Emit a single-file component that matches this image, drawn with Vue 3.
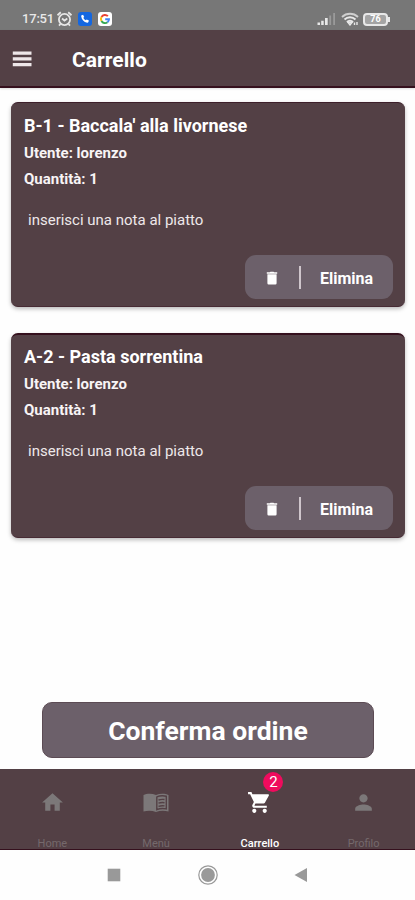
<script setup>
const dishes = [
  { id: 1, title: "B-1 - Baccala' alla livornese", cls: 'first' },
  { id: 2, title: 'A-2 - Pasta sorrentina', cls: 'second' },
]
const tabs = [
  { name: 'Home', icon: 'M10 20v-6h4v6h5v-8h3L12 3 2 12h3v8z' },
  { name: 'Menù', icon: 'book' },
  {
    name: 'Carrello',
    active: true,
    badge: 2,
    icon: 'M7 18c-1.1 0-1.99.9-1.99 2S5.900 22 7 22s2-.9 2-2-.9-2-2-2zM1 2v2h2l3.600 7.590-1.350 2.450c-.16.28-.25.61-.25.96 0 1.100.9 2 2 2h12v-2H7.420c-.14 0-.25-.11-.25-.25l.03-.12.9-1.630h7.450c.75 0 1.410-.41 1.750-1.030l3.580-6.490A1 1 0 0 0 20 4H5.210l-.94-2H1zm16 16c-1.100 0-1.990.9-1.990 2s.89 2 1.990 2 2-.9 2-2-.9-2-2-2z',
  },
  { name: 'Profilo', icon: 'M12 12c2.210 0 4-1.790 4-4s-1.790-4-4-4-4 1.790-4 4 1.790 4 4 4zm0 2c-2.670 0-8 1.340-8 4v2h16v-2c0-2.660-5.330-4-8-4z' },
]
</script>

<template>
  <div class="screen">
    <div class="status">
      <span class="time">17:51</span>
      <svg class="alarm" viewBox="0 0 16 16" fill="none" stroke="#e6e6e6" stroke-width="1.800">
        <circle cx="8" cy="8.500" r="5.600" />
        <path d="M5.500 7.500L8 9.500l2.800-2M1 4.200L4.300 1.300M15 4.200L11.700 1.300M4 13l-1.500 1.700M12 13l1.500 1.700" />
      </svg>
      <svg class="app phone" viewBox="0 0 14 14">
        <rect width="14" height="14" rx="3" fill="#1467e0" />
        <path d="M3.600 3.200l1.500-.5 1.100 2.200-.9.900c.5 1.200 1.300 2 2.500 2.500l.9-.9 2.200 1.100-.5 1.600c-.2.500-.7.700-1.200.6-3.300-.5-5.500-2.800-6-6.100-.1-.6 0-1.200.4-1.400z" fill="#fff" />
      </svg>
      <svg class="app" viewBox="0 0 14 14" fill="none" stroke-width="1.900">
        <rect width="14" height="14" rx="3" fill="#fff" />
        <path d="M9.900 4.200A4 4 0 0 0 3.500 5" stroke="#ea4335" />
        <path d="M3.500 5a4 4 0 0 0 0 4" stroke="#fbbc05" />
        <path d="M3.500 9a4 4 0 0 0 6 1.200" stroke="#34a853" />
        <path d="M9.500 10.200A4 4 0 0 0 11 7.200H7.200" stroke="#4285f4" />
      </svg>
      <svg class="signal" viewBox="0 0 20 14">
        <path fill="#e8e8e8" d="M.5 10.500h2.500V13H.5zM4.200 8.800h2.500V13H4.200zM8 6h2.700v7H8z" />
        <path fill="#9a9a9a" d="M12.300 3.500h1.800V13h-1.800zM16.200 1H18v12h-1.800z" />
      </svg>
      <svg class="wifi" viewBox="0 0 18 14" fill="none" stroke="#e8e8e8" stroke-width="1.900">
        <path d="M1 5c4.500-4.300 11.500-4.300 16 0" stroke="#cfcfcf" />
        <path d="M3.500 7.500c3-3 8-3 11 0M6 10c1.700-1.700 4.300-1.700 6 0" />
        <path d="M7 10.500h4L9 13zM13.500 10.500v2.500M16 10v3" stroke-width="1.400" />
      </svg>
      <div class="battery">76</div>
    </div>

    <header class="bar">
      <svg class="burger" viewBox="0 0 20 16"><path fill="#eee7e9" d="M.8.500h18.700v3.200H.8zM.8 6.200h18.700v3.200H.8zM.8 12h18.700v3.200H.8z" /></svg>
      <h1>Carrello</h1>
    </header>

    <main>
      <article v-for="dish in dishes" :key="dish.id" class="card" :class="dish.cls">
        <h2>{{ dish.title }}</h2>
        <p class="meta user">Utente: lorenzo</p>
        <p class="meta">Quantità: 1</p>
        <p class="note">inserisci una nota al piatto</p>
        <button class="remove">
          <svg viewBox="0 0 12 14"><path fill="#fff" d="M.8 1.300h3L4.500.7h3l.7.600h3v1.500H.8zM1.400 3.300h9.200v8.900a1.200 1.200 0 0 1-1.200 1.200H2.600a1.200 1.200 0 0 1-1.200-1.200z" /></svg>
          <i></i>
          <span class="remove-label">Elimina</span>
        </button>
      </article>
      <button class="confirm"><span>Conferma ordine</span></button>
    </main>

    <nav>
      <div v-for="tab in tabs" :key="tab.name" class="tab" :class="{ active: tab.active }">
        <div class="icon">
          <svg v-if="tab.icon === 'book'" class="book" viewBox="0 0 26 20">
            <path fill="currentColor" d="M.5 2C4 .2 9 .2 13 2c4-1.800 9-1.800 12.500 0v16.500c-4-1.200-8.500-1.200-12.500.5-4-1.700-8.500-1.700-12.500-.5z" />
            <path fill="none" stroke="#534045" stroke-width="1.400" d="M13.800 3.500v13.200c3-1.300 6.500-1.400 9.500-.8V3.200c-3-.7-6.500-.6-9.500.6M15.500 7c2-.7 4-.8 6-.5M15.500 10.200c2-.7 4-.8 6-.5M15.500 13.400c2-.7 4-.8 6-.5" />
          </svg>
          <svg v-else viewBox="0 0 24 24"><path fill="currentColor" :d="tab.icon" /></svg>
          <b v-if="tab.badge" class="badge">{{ tab.badge }}</b>
        </div>
        <span class="label">{{ tab.name }}</span>
      </div>
    </nav>

    <div class="system">
      <svg viewBox="0 0 14 14"><path fill="#999" d="M.7.700h12.600v12.600H.7z" /></svg>
      <svg class="circle" viewBox="0 0 20 20"><circle cx="10" cy="10" r="9.200" fill="none" stroke="#999" stroke-width="1.200" /><circle cx="10" cy="10" r="6.900" fill="#999" /></svg>
      <svg class="back" viewBox="0 0 14 14"><path fill="#999" d="M.5 7L13 0v14z" /></svg>
    </div>
  </div>
</template>

<style>
body { margin: 0; background: #fff; }
</style>

<style scoped>
* { box-sizing: border-box; }
.screen {
  width: 415px;
  height: 900px;
  display: flex;
  flex-direction: column;
  overflow: hidden;
  background: #fefefe;
  color: #fff;
  font-family: Roboto, "Liberation Sans", sans-serif;
}
h1, h2, p { margin: 0; white-space: nowrap; }
button { border: 0; padding: 0; color: inherit; font-family: inherit; font-weight: 700; white-space: nowrap; }
svg { display: block; flex: none; }
.status {
  height: 30px;
  flex: none;
  display: flex;
  align-items: center;
  padding: 8px 23px 0 22px;
  background: #777;
}
.time { width: 34px; font-size: 13px; line-height: 16px; font-weight: 500; letter-spacing: -0.200px; color: #e8e8e8; }
.alarm { width: 17px; height: 16px; }
.app { width: 14px; height: 14px; margin-left: 6px; }
.app.phone { margin-left: 5px; }
.signal { width: 20px; height: 14px; margin-left: auto; }
.wifi { width: 18px; height: 14px; margin: 0 4px; }
.battery {
  position: relative;
  width: 25px;
  height: 13px;
  border: 2px solid #e8e8e8;
  border-radius: 4px;
  background: #a4a4a4;
  font-size: 9px;
  font-weight: 700;
  line-height: 9px;
  text-align: center;
  margin-right: 4px;
}
.battery::after {
  content: "";
  position: absolute;
  right: -4px;
  top: 2px;
  width: 2px;
  height: 5px;
  background: #e8e8e8;
}
.bar {
  height: 58px;
  flex: none;
  display: flex;
  align-items: center;
  padding: 2px 0 0 12px;
  background: #534045;
  border-bottom: 2px solid #35101d;
  box-shadow: 0 1px 2px #0002;
}
.burger { width: 20px; height: 16px; margin-right: 40px; }
h1 { padding-top: 2px; font-size: 21px; line-height: 28px; font-weight: 700; letter-spacing: 0.050px; }
main {
  height: 681px;
  flex: none;
  display: flex;
  flex-direction: column;
  padding: 14px 10px 0 11px;
}
.card {
  height: 205px;
  flex: none;
  display: flex;
  flex-direction: column;
  margin-bottom: 26px;
  padding: 12px 12px 8px 13px;
  border-radius: 7px;
  background: #534045;
  border-top: 1px solid #3d1f2a;
  border-bottom: 1px solid #472b34;
  box-shadow: 0 2px 4px #0004;
}
.second { border-top: 2px solid #35101d; padding-top: 11px; }
h2 { font-size: 18px; line-height: 22px; font-weight: 700; }
.meta { font-size: 15px; line-height: 20px; font-weight: 700; margin-top: 6px; color: #f8f4f5; }
.note { padding-left: 4px; margin-top: 21px; font-size: 15px; line-height: 20px; color: #eee8ea; }
.remove {
  align-self: flex-end;
  display: flex;
  align-items: center;
  width: 148px;
  height: 44px;
  margin-top: auto;
  margin-bottom: -1px;
  padding: 1px 0 0 21px;
  border-radius: 11px;
  background: #6c606a;
  font-size: 16px;
}
.remove svg { width: 12px; height: 14px; }
.remove i { width: 2px; height: 23px; margin: 0 19px 0 21px; background: #cfc6cc; }
.remove-label { padding-top: 1px; }
.confirm {
  width: 332px;
  height: 56px;
  margin: 138px 0 0 31px;
  border: 1px solid #5c4b54;
  border-radius: 10px;
  background: #6c606a;
  font-size: 26.500px;
  line-height: 32px;
}
.confirm span { position: relative; top: 1px; }
nav {
  height: 81px;
  flex: none;
  display: grid;
  grid-template-columns: repeat(4, 1fr);
  background: #534045;
  border-bottom: 1px solid #35101d;
  overflow: hidden;
}
.tab { display: flex; flex-direction: column; align-items: center; padding-left: 1px; color: #7c7879; }
.icon { position: relative; margin-top: 20px; height: 26px; display: flex; align-items: center; }
.icon svg { width: 25px; height: 25px; }
.icon .book { width: 26px; height: 20px; margin-top: 2px; }
.label { margin-top: 22px; font-size: 11px; line-height: 14px; color: #75696c; }
.active { color: #fff; }
.active .label { color: #fff; font-weight: 500; }
.badge {
  position: absolute;
  left: 16px;
  top: -17px;
  width: 20px;
  height: 20px;
  border-radius: 50%;
  background: #ef0b5d;
  font-size: 15px;
  font-weight: 400;
  line-height: 20px;
  text-align: center;
}
.system {
  height: 50px;
  display: flex;
  align-items: center;
  justify-content: center;
  gap: 77px;
  background: #fefefe;
}
.system svg { width: 14px; height: 14px; }
.system .circle { width: 20px; height: 20px; }
.system .back { margin: 0 1px 0 -1px; }
</style>
